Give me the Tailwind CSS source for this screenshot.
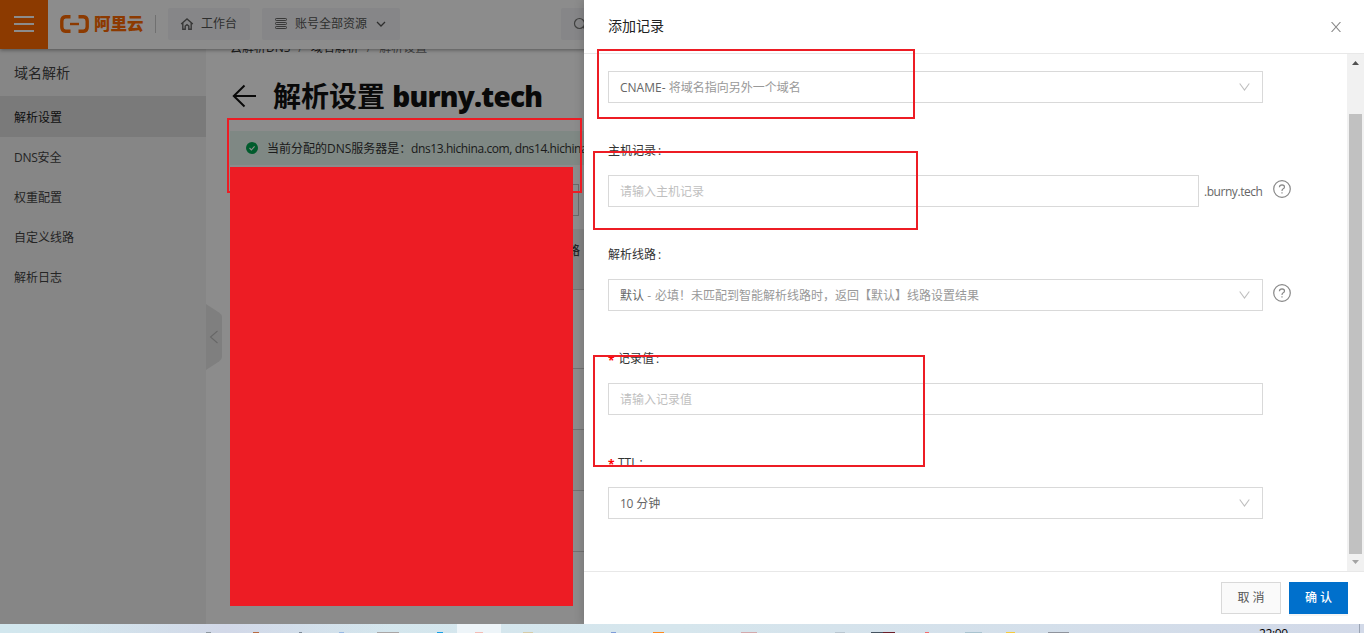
<!DOCTYPE html>
<html lang="zh-CN">
<head>
<meta charset="utf-8">
<title>云解析DNS</title>
<script src="https://cdn.jsdelivr.net/npm/@tailwindcss/browser@4"></script>
</head>
<body class="relative flex h-[633px] w-[1364px] flex-col overflow-hidden bg-white font-['Open_Sans','Noto_Sans_CJK_SC',sans-serif] text-xs text-[#444]">

<div class="relative flex h-[624px] flex-col overflow-hidden">
  <header class="relative z-10 flex h-[49px] shrink-0 items-center bg-white pb-px shadow-[0_1px_4px_rgba(0,0,0,0.4)]">
    <div class="-mb-px flex h-[49px] w-12 flex-col items-center justify-center gap-[5px] bg-[#ff6a00] pb-px">
      <span class="h-0.5 w-5 bg-white"></span><span class="h-0.5 w-5 bg-white"></span><span class="h-0.5 w-5 bg-white"></span>
    </div>
    <svg class="ml-3 h-[18px] w-[29px]" viewBox="0 0 29 18" fill="none" stroke="#ff6a00">
      <path d="M10.5 1.7H5.5Q1.8 2 1.8 6V12Q1.8 16 5.5 16.3H10.5M18.5 1.7H23.5Q27.2 2 27.2 6V12Q27.2 16 23.5 16.3H18.5" stroke-width="3.4"/>
      <path d="M10 9H19" stroke-width="2.4"/>
    </svg>
    <span class="ml-[5px] w-[49px] text-[16.5px] leading-none font-black whitespace-nowrap text-[#ff6a00]">阿里云</span>
    <span class="ml-3 h-[18px] w-px bg-[#ccc]"></span>
    <div class="ml-3 flex h-8 w-[82px] items-center rounded-xs bg-[#f4f5f7] pl-3 text-[#555]">
      <svg class="h-[14px] w-[14px]" viewBox="0 0 14 14" fill="none" stroke="#666" stroke-width="1.4"><path d="M1.2 7L7 2L12.8 7M2.8 6V12.2H5.2V9L7 7.6L8.8 9V12.2H11.2V6"/></svg>
      <span class="ml-[7px]">工作台</span>
    </div>
    <div class="ml-3 flex h-8 w-[138px] items-center rounded-xs bg-[#f4f5f7] pl-[13px] text-[#555]">
      <svg class="h-3 w-3" viewBox="0 0 12 12" fill="none" stroke="#666"><rect x=".5" y=".5" width="11" height="2" rx=".7"/><rect x=".5" y="4.5" width="11" height="2" rx=".7"/><rect x=".5" y="8.5" width="11" height="2" rx=".7"/></svg>
      <span class="ml-[8px]">账号全部资源</span>
      <svg class="ml-[9px] h-2 w-[10px]" viewBox="0 0 10 8" fill="none" stroke="#555" stroke-width="1.3"><path d="M1 2L5 6L9 2"/></svg>
    </div>
    <div class="ml-[161px] flex h-8 w-40 items-center rounded-xs bg-[#f4f5f7] pl-3">
      <svg class="h-[14px] w-[14px]" viewBox="0 0 14 14" fill="none" stroke="#777" stroke-width="1.2"><circle cx="6.5" cy="6.5" r="5"/><path d="M10 10L13 13"/></svg>
    </div>
  </header>

  <div class="flex flex-1 overflow-hidden">
    <aside class="w-[206px] shrink-0 bg-[#f4f4f4]">
      <div class="flex h-[47px] items-center pl-[14px] text-sm">域名解析</div>
      <nav class="flex flex-col">
        <a class="flex h-[41px] items-center bg-[#dedede] pt-0.5 pl-[14px] text-[#222]">解析设置</a>
        <a class="flex h-10 items-center pt-0.5 pl-[14px]"><span class="tracking-[-0.3px]">DNS</span>安全</a>
        <a class="flex h-10 items-center pt-0.5 pl-[14px]">权重配置</a>
        <a class="flex h-10 items-center pt-0.5 pl-[14px]">自定义线路</a>
        <a class="flex h-10 items-center pt-0.5 pl-[14px]">解析日志</a>
      </nav>
    </aside>
    <div class="flex w-6 shrink-0 flex-col justify-start pt-[255px]">
      <svg class="h-[66px] w-4" viewBox="0 0 16 66"><path d="M0 0L13 8.5Q16 10.5 16 13V53Q16 55.5 13 57.5L0 66Z" fill="#e8e8e8"/><path d="M11.5 27L4.5 33L11.5 39" fill="none" stroke="#bbb" stroke-width="1.1"/></svg>
    </div>
    <main class="min-w-0 flex-1">
      <div class="-mt-[10px] flex h-[18px] items-center whitespace-pre text-[#333]"><span>云解析DNS</span><span class="mx-2 text-[#888]">/</span><span>域名解析</span><span class="mx-2 text-[#888]">/</span><span class="text-[#777]">解析设置</span></div>
      <div class="mt-[18px] flex h-[42px] items-center">
        <svg class="ml-[2px] h-6 w-6" viewBox="0 0 24 24" fill="none" stroke="#111" stroke-width="2"><path d="M12.5 1.5L1.8 12L12.5 22.5M1.8 12H24"/></svg>
        <h1 class="ml-[17px] text-[28px] leading-none font-bold whitespace-nowrap text-[#111]">解析设置 <span class="font-extrabold tracking-[-0.8px]">burny.tech</span></h1>
      </div>
      <div class="mt-[14px] flex h-[34px] items-center bg-[#e7f8f0] whitespace-nowrap text-[#333]">
        <svg class="ml-4 h-3 w-3" viewBox="0 0 12 12"><circle cx="6" cy="6" r="6" fill="#00a651"/><path d="M3.5 6L5.4 7.9L8.6 4.4" fill="none" stroke="#fff" stroke-width="1.1"/></svg>
        <span class="ml-[9px] w-[144px] pt-0.5">当前分配的DNS服务器是：</span><span class="pt-0.5 tracking-[-0.4px]">dns13.hichina.com, dns14.hichina.com</span>
      </div>
      <div class="mt-[19px] h-8 w-[349px] border border-[#c0c0c0]"></div>
      <div class="mt-[13px] flex h-[61px] items-center border-b border-[#d0d0d0] bg-[#efefef] pb-4"><span class="w-[350px] text-right font-medium">解析线路</span></div>
      <div class="h-[79px] border-b border-[#d0d0d0]"></div>
      <div class="h-[61px] border-b border-[#d0d0d0]"></div>
      <div class="h-[61px] border-b border-[#d0d0d0] bg-[#fafafa]"></div>
      <div class="h-[61px] border-b border-[#d0d0d0]"></div>
    </main>
  </div>

  <div class="absolute inset-0 z-20 bg-black/45"></div>

  <section class="absolute inset-y-0 right-0 z-30 flex w-[780px] flex-col bg-white shadow-[-2px_0_8px_rgba(0,0,0,0.15)]">
    <div class="flex h-[54px] items-center justify-between border-b border-[#e8e8e8] pr-[23px] pl-6 text-[#222]">
      <h2 class="pb-0.5 text-sm">添加记录</h2>
      <svg class="h-[10px] w-[10px]" viewBox="0 0 10 10" fill="none" stroke="#888" stroke-width="1.1"><path d="M.5 0L9.5 10M9.5 0L.5 10"/></svg>
    </div>
    <div class="flex h-[517px]">
      <form class="flex flex-1 flex-col pt-[17px] pl-6 text-[#666]">
        <div class="flex h-8 w-[655px] items-center justify-between border border-[#d9d9d9] pr-3 pl-[11px]">
          <span class="pt-0.5"><span>CNAME-</span> <span class="text-[#999]">将域名指向另外一个域名</span></span>
          <svg class="h-2 w-[11px]" viewBox="0 0 11 8" fill="none" stroke="#bfbfbf" stroke-width="1.1"><path d="M.7 .5L5.5 7L10.3 .5"/></svg>
        </div>
        <label class="mt-10 mb-4 flex h-4 items-center text-[#333]">主机记录<span class="ml-0.5">:</span></label>
        <div class="flex h-8 items-center">
          <div class="flex h-8 w-[591px] items-center border border-[#d9d9d9] pt-0.5 pl-[11px] text-[#bfbfbf]">请输入主机记录</div>
          <span class="w-[64px] pt-0.5 pl-[5px] tracking-[-0.45px]">.burny.tech</span>
          <svg class="mb-1 ml-[10px] h-[18px] w-[18px]" viewBox="0 0 18 18" fill="none" stroke="#888" stroke-width="1.2"><circle cx="9" cy="9" r="8.3"/><path d="M6.4 7.2Q6.6 4.9 9 4.9Q11.5 5 11.5 7.1Q11.5 8.3 9.9 9Q9 9.5 9 11"/><path d="M9 12.2V13.4"/></svg>
        </div>
        <label class="mt-10 mb-4 flex h-4 items-center text-[#333]">解析线路<span class="ml-0.5">:</span></label>
        <div class="flex h-8 items-center">
          <div class="flex h-8 w-[655px] items-center justify-between border border-[#d9d9d9] pr-3 pl-[11px]">
            <span class="pt-0.5">默认 <span class="text-[#999]"><span class="mr-px">-</span> 必填！未匹配到智能解析线路时，返回【默认】线路设置结果</span></span>
            <svg class="h-2 w-[11px]" viewBox="0 0 11 8" fill="none" stroke="#bfbfbf" stroke-width="1.1"><path d="M.7 .5L5.5 7L10.3 .5"/></svg>
          </div>
          <svg class="mb-1 ml-[10px] h-[18px] w-[18px]" viewBox="0 0 18 18" fill="none" stroke="#888" stroke-width="1.2"><circle cx="9" cy="9" r="8.3"/><path d="M6.4 7.2Q6.6 4.9 9 4.9Q11.5 5 11.5 7.1Q11.5 8.3 9.9 9Q9 9.5 9 11"/><path d="M9 12.2V13.4"/></svg>
        </div>
        <label class="mt-10 mb-4 flex h-4 items-center text-[#333]"><span class="w-[10px] pt-1 font-bold text-[#f00]">*</span>记录值<span class="ml-0.5">:</span></label>
        <div class="flex h-8 w-[655px] items-center border border-[#d9d9d9] pt-0.5 pl-[11px] text-[#bfbfbf]">请输入记录值</div>
        <label class="mt-10 mb-4 flex h-4 items-center text-[#333]"><span class="w-[10px] pt-1 font-bold text-[#f00]">*</span>TTL<span class="ml-0.5">:</span></label>
        <div class="flex h-8 w-[655px] items-center justify-between border border-[#d9d9d9] pr-3 pl-[11px]">
          <span class="pt-0.5"><span class="tracking-[-0.3px]">10</span> 分钟</span>
          <svg class="h-2 w-[11px]" viewBox="0 0 11 8" fill="none" stroke="#bfbfbf" stroke-width="1.1"><path d="M.7 .5L5.5 7L10.3 .5"/></svg>
        </div>
      </form>
      <div class="flex w-[17px] flex-col items-center justify-between bg-[#f1f1f1]">
        <svg class="h-[60px] w-[17px]" viewBox="0 0 17 60"><path d="M5 11L8.5 7L12 11Z" fill="#505050"/></svg>
        <div class="h-[440px] w-[13px] bg-[#c1c1c1]"></div>
        <svg class="h-[17px] w-[17px]" viewBox="0 0 17 17"><path d="M5 6L8.5 10L12 6Z" fill="#a3a3a3"/></svg>
      </div>
    </div>
    <div class="flex h-[53px] items-center justify-end gap-2 border-t border-[#e8e8e8] pr-4">
      <button class="h-8 w-[60px] border border-[#d9d9d9] bg-[#fafafa] text-[#555]">取 消</button>
      <button class="h-8 w-[59px] bg-[#0070cc] font-medium text-white shadow-[0_2px_0_rgba(0,0,0,0.04)]">确 认</button>
    </div>
  </section>
</div>

<footer class="relative h-[9px] overflow-hidden bg-linear-to-r from-[#d2e7ee] via-[#d6e6ed] to-[#d2d9e8]">
  <svg class="h-[9px] w-[1364px]" viewBox="0 0 1364 9">
    <defs><linearGradient id="haze"><stop offset="0" stop-color="#d2d8e8" stop-opacity="0"/><stop offset=".5" stop-color="#d2d8e8"/><stop offset="1" stop-color="#d2d8e8" stop-opacity="0"/></linearGradient></defs>
    <rect x="60" width="330" height="9" fill="url(#haze)"/>
    <rect x="457" width="44" height="9" fill="#eef5f9"/>
    <rect x="206" y="8" width="5" height="1" fill="#8d98a0"/><rect x="253" y="8" width="6" height="1" fill="#b86b43"/>
    <rect x="299" y="8" width="3" height="1" fill="#7b8895"/><rect x="339" y="8" width="5" height="1" fill="#97b8e4"/>
    <rect x="377" y="8" width="22" height="1" fill="#a9a6a6"/><rect x="437" y="8" width="6" height="1" fill="#189fe5"/>
    <rect x="475" y="8" width="8" height="1" fill="#f3bcb5"/><rect x="523" y="8" width="10" height="1" fill="#d6cba8"/>
    <rect x="611" y="8" width="5" height="1" fill="#7d9bd8"/><rect x="653" y="8" width="11" height="1" fill="#ff8a1e"/>
    <rect x="741" y="8" width="16" height="1" fill="#d3a9ac"/><rect x="835" y="8" width="10" height="1" fill="#b9c6d0"/>
    <rect x="871" y="8" width="12" height="1" fill="#46525f"/><rect x="883" y="8" width="12" height="1" fill="#6b1f2a"/>
    <rect x="925" y="8" width="4" height="1" fill="#f26d6d"/><rect x="965" y="8" width="17" height="1" fill="#a9c3cf"/>
    <rect x="1006" y="8" width="9" height="1" fill="#f6cb3c"/><rect x="1048" y="8" width="21" height="1" fill="#8f949d"/>
    <rect x="1359" width="1" height="9" fill="#9aa3b3"/>
  </svg>
  <span class="absolute top-[3px] left-[1259px] text-xs leading-[13px] tracking-[-0.4px] text-black">22:00</span>
</footer>

<!-- Red annotations laid over the page -->
<div class="absolute top-[118px] left-[227px] z-40 h-[75px] w-[355px] border-2 border-[#ed1c24]"></div>
<div class="absolute top-[167px] left-[230px] z-40 h-[439px] w-[343px] bg-[#ed1c24]"></div>
<div class="absolute top-[49px] left-[597px] z-40 h-[70px] w-[318px] border-2 border-[#ed1c24]"></div>
<div class="absolute top-[151px] left-[593px] z-40 h-[79px] w-[325px] border-2 border-[#ed1c24]"></div>
<div class="absolute top-[355px] left-[593px] z-40 h-[112px] w-[332px] border-2 border-[#ed1c24]"></div>
</body>
</html>
